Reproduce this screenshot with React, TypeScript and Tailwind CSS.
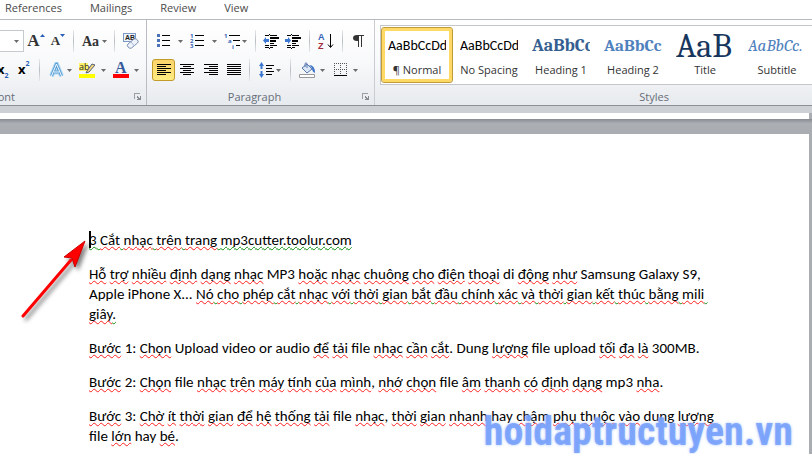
import type { ReactNode } from "react";
import clsx from "clsx";

const tabs = ["References", "Mailings", "Review", "View"];

const styles = [
  {
    name: "¶ Normal",
    sample: "AaBbCcDd",
    className: "font-['Carlito','Lato',sans-serif] text-[14px] text-black",
    selected: true,
  },
  {
    name: "No Spacing",
    sample: "AaBbCcDd",
    className: "font-['Carlito','Lato',sans-serif] text-[14px] text-black",
  },
  {
    name: "Heading 1",
    sample: "AaBbCc",
    className:
      "font-['Caladea','DejaVu_Serif_Condensed',serif] text-[18px] font-bold text-[#365f91]",
  },
  {
    name: "Heading 2",
    sample: "AaBbCc",
    className:
      "font-['Caladea','DejaVu_Serif_Condensed',serif] text-[17px] font-bold text-[#4f81bd]",
  },
  {
    name: "Title",
    sample: "AaB",
    className:
      "font-['Caladea','DejaVu_Serif_Condensed',serif] text-[34px] text-[#17365d]",
  },
  {
    name: "Subtitle",
    sample: "AaBbCc.",
    className:
      "font-['Caladea','DejaVu_Serif_Condensed',serif] text-[17px] italic text-[#4f81bd]",
  },
];

const paragraphs = [
  { grammar: [0], lines: ["3 Cắt nhạc trên trang mp3cutter.toolur.com"] },
  {
    grammar: [2, 3],
    lines: [
      "Hỗ trợ nhiều định dạng nhạc MP3 hoặc nhạc chuông cho điện thoại di động như Samsung Galaxy S9,",
      "Apple iPhone X... ",
      "Nó cho phép cắt nhạc với thời gian bắt đầu chính xác và thời gian kết thúc bằng mili ",
      "giây.",
    ],
  },
  {
    grammar: [],
    lines: [
      "Bước 1: Chọn Upload video or audio để tải file nhạc cần cắt. Dung lượng file upload tối đa là 300MB.",
    ],
  },
  {
    grammar: [],
    lines: [
      "Bước 2: Chọn file nhạc trên máy tính của mình, nhớ chọn file âm thanh có định dạng mp3 nha.",
    ],
  },
  {
    grammar: [],
    lines: [
      "Bước 3: Chờ ít thời gian để hệ thống tải file nhạc, thời gian nhanh hay chậm phụ thuộc vào dung lượng",
      "file lớn hay bé.",
    ],
  },
];

// Words the spell checker accepts
const dictionary = new Set(
  "MP3 di Samsung Galaxy S9 Apple iPhone X Upload video or audio file Dung upload 300MB mp3 hay dung mp3cutter.toolur.com 1 2 3".split(
    " ",
  ),
);

function CheckedText({ text, grammar }: { text: string; grammar: boolean }) {
  return text.split(/(\s+|[.,:]+(?=\s|$))/).map((part, i) => {
    const misspelled = /\p{L}/u.test(part) && !dictionary.has(part);
    if (!misspelled && !grammar) return part;
    return (
      <span
        key={i}
        className={clsx(
          "underline decoration-wavy decoration-1 underline-offset-1 [text-decoration-skip-ink:none]",
          misspelled ? "decoration-[#ff2020]" : "decoration-[#109010]",
        )}
      >
        {part}
      </span>
    );
  });
}

function Tool({
  label,
  className,
  children,
}: {
  label: string;
  className: string;
  children: ReactNode;
}) {
  return (
    <button
      type="button"
      aria-label={label}
      className={clsx("flex h-[22px] shrink-0 items-center", className)}
    >
      {children}
    </button>
  );
}

function Caret() {
  return (
    <svg width="5" height="3" className="shrink-0" fill="#6b6b6b">
      <path d="M0 0h5L2.5 3z" />
    </svg>
  );
}

function Separator() {
  return (
    <div className="mx-1 h-[22px] w-px shrink-0 bg-linear-to-b from-[#e6e8eb] via-[#b9bec5] to-[#e6e8eb]" />
  );
}

function Lines({ rows }: { rows: [number, number][] }) {
  return (
    <svg width="14" height="12" className="shrink-0" shapeRendering="crispEdges">
      {rows.map(([x, w], i) => (
        <rect key={i} x={x} y={i * 2} width={w} height="1" fill="#000" />
      ))}
    </svg>
  );
}

function IndentIcon({ increase }: { increase?: boolean }) {
  return (
    <svg width="16" height="15" shapeRendering="crispEdges">
      <path d="M2 1h4v1H2zM7 1h7v1H7zM2 11h4v1H2zM7 11h7v1H7zM2 13h4v1H2zM7 13h3v1H7zM7 3h9v2H7zM7 6h6v2H7zM7 9h4v1H7zM6 0h1v1H6zM6 14h1v1H6z" />
      <path
        d={increase ? "M6 6.500 3 3v2H0v3h3v2z" : "M0 6.500 3 3v2h3v3H3v2z"}
        fill="#3c78d2"
        shapeRendering="auto"
      />
    </svg>
  );
}

function Group({
  name,
  launcher,
  className,
  children,
}: {
  name: string;
  launcher?: boolean;
  className?: string;
  children: ReactNode;
}) {
  return (
    <section
      aria-label={name}
      className={clsx("flex shrink-0 flex-col justify-between", className)}
    >
      {children}
      <div className="flex h-4 items-center">
        <h2 className="flex-1 text-center leading-4 text-[#666e7a]">{name}</h2>
        {launcher && (
          <button type="button" aria-label={`${name} settings`} className="mr-1">
            <svg width="8" height="8" shapeRendering="crispEdges">
              <path d="M.5 6V.5H6" stroke="#9a9fa6" fill="none" />
              <path d="M3 3h1v1h1v1h1V3h1v4H3V6h1V5H3z" fill="#868b92" />
            </svg>
          </button>
        )}
      </div>
    </section>
  );
}

function FontGroup() {
  return (
    <Group
      name="Font"
      launcher
      className="w-[147px] border-r border-[#b9bdc3] [&_h2]:-ml-2 [&_h2]:text-left"
    >
      <div className="flex flex-col gap-[7px] pt-[10px] font-['Liberation_Serif',serif] font-bold text-[#333]">
        <div className="flex items-center">
          <Tool label="Font size" className="mr-px w-6 justify-end border border-l-0 border-[#c6c9ce] bg-white pr-1">
            <Caret />
          </Tool>
          <Tool label="Grow font" className="w-[22px] justify-center text-[17px]">
            A
            <svg width="5" height="14" fill="#2b5fb8"><path d="M0 3h5L2.500 0z" /></svg>
          </Tool>
          <Tool label="Shrink font" className="w-[22px] justify-center text-[13px]">
            A
            <svg width="5" height="14" fill="#2b5fb8"><path d="M0 0h5L2.500 3z" /></svg>
          </Tool>
          <Separator />
          <Tool label="Change case" className="w-8 gap-[3px] pl-1 text-[14px]">
            Aa
            <Caret />
          </Tool>
          <Separator />
          <Tool label="Clear formatting" className="w-6 justify-center">
            <svg width="16" height="16">
              <rect x=".5" y=".5" width="12" height="8" fill="#eef4fc" stroke="#7c98c4" />
              <text x="2" y="7" fontSize="7" fontFamily="Liberation Sans" fill="#222">AB</text>
              <path d="M5 11l6-5q2-1 3.500 1t0 3l-6 5q-2 1-3.500-1t0-3z" fill="#eef2fa" stroke="#7b8fb5" />
              <path d="M8 9l3.500 4" stroke="#a9b7d1" />
            </svg>
          </Tool>
        </div>
        <div className="flex items-center font-['Open_Sans',sans-serif]">
          <Tool label="Subscript" className="-ml-[3px] w-[17px] text-[13px] text-black">
            x<span className="self-end text-[7px] text-[#2b5fb8]">2</span>
          </Tool>
          <Tool label="Superscript" className="w-[21px] pl-1 text-[13px] text-black">
            x<span className="self-start text-[7px] text-[#2b5fb8]">2</span>
          </Tool>
          <Separator />
          <Tool label="Text effects" className="w-[34px] gap-[3px] pl-[5px]">
            <svg width="15" height="16" className="shrink-0" fill="none" strokeLinejoin="round">
              <path d="M2.500 14 7.500 2l5 12M5 10h5" stroke="#b9def5" strokeWidth="5" />
              <path d="M2.500 14 7.500 2l5 12M5 10h5" stroke="#5b9fd4" strokeWidth="3" />
              <path d="M2.500 14 7.500 2l5 12M5 10h5" stroke="#f2faff" strokeWidth="1" />
            </svg>
            <Caret />
          </Tool>
          <Tool label="Text highlight color" className="w-[34px] gap-[6px] pl-px">
            <svg width="16" height="16">
              <path d="M0 1h9v8H0z" fill="#fff36b" />
              <text x="0" y="8" fontSize="9" fontFamily="Open Sans" fontWeight="400" fill="#222">ab</text>
              <path d="M8 9l5-7 3 1-6 7-3 1z" fill="#f4d67a" stroke="#55617a" />
              <path d="M0 12h16v4H0z" fill="#ff0" />
            </svg>
            <Caret />
          </Tool>
          <Tool label="Font color" className="w-[30px] gap-[5px] pl-px">
            <svg width="16" height="16">
              <text x="2" y="11" fontSize="16" fontFamily="Liberation Serif" fontWeight="700" fill="#345a9c">A</text>
              <path d="M0 12h16v4H0z" fill="#f00" />
            </svg>
            <Caret />
          </Tool>
        </div>
      </div>
    </Group>
  );
}

function ParagraphGroup() {
  return (
    <Group name="Paragraph" launcher className="w-[228px] border-r border-[#c9ccd1]">
      <div className="flex flex-col gap-[7px] pt-[10px]">
        <div className="flex items-center pl-[7px]">
          <Tool label="Bullets" className="w-[34px] gap-[7px] pl-[3px]">
            <svg width="14" height="14">
              <path d="M0 0h3v3H0zM0 5h3v3H0zM0 10h3v3H0z" fill="#4a72b8" />
              <path d="M5 1.500h8M5 6.500h8M5 11.500h8" stroke="#000" />
            </svg>
            <Caret />
          </Tool>
          <Tool label="Numbering" className="w-[34px] gap-[7px] pl-[2px]">
            <svg width="15" height="16" fontSize="6" fontFamily="Open Sans" fontWeight="700" fill="#3563b5">
              <text y="5">1</text>
              <text y="10">2</text>
              <text y="15">3</text>
              <path d="M5 2.500h9M5 7.500h9M5 12.500h9" stroke="#000" />
            </svg>
            <Caret />
          </Tool>
          <Tool label="Multilevel list" className="w-[29px] gap-[2px] pl-[2px]">
            <svg width="16" height="16" fontSize="6" fontFamily="Open Sans" fontWeight="700" fill="#3563b5">
              <text y="5">1</text>
              <text x="4" y="10">a</text>
              <text x="8" y="16">i</text>
              <path d="M5 2.500h11M9 7.500h7M12 12.500h4" stroke="#000" />
            </svg>
            <Caret />
          </Tool>
          <Separator />
          <Tool label="Decrease indent" className="w-[22px] pl-[3px]">
            <IndentIcon />
          </Tool>
          <Tool label="Increase indent" className="w-[23px] pl-[3px]">
            <IndentIcon increase />
          </Tool>
          <Separator />
          <Tool label="Sort" className="w-6 pl-1">
            <svg width="16" height="16" fontSize="9" fontFamily="Liberation Sans" fontWeight="700">
              <text y="7" fill="#3563b5">A</text>
              <text y="16" fill="#a02c3c">Z</text>
              <path d="M12.500 1v13M10 11.500l2.500 3 2.500-3" stroke="#000" fill="none" />
            </svg>
          </Tool>
          <Separator />
          <Tool label="Show paragraph marks" className="w-6 justify-center text-black">
            <svg width="12" height="12">
              <path d="M5 0h6v1H5zM4 0q-4 0-4 3t4 3h2V0z" fill="#333" />
              <path d="M5.500 0v12M8.500 0v12" stroke="#333" />
            </svg>
          </Tool>
        </div>
        <div className="flex items-center pl-[5px]">
          <Tool label="Align left" className="w-[23px] justify-center rounded-[3px] border border-[#c29b29] bg-linear-to-b from-[#fbd36b] to-[#ffec80]">
            <Lines rows={[[0, 14], [0, 9], [0, 14], [0, 9], [0, 14], [0, 9]]} />
          </Tool>
          <Tool label="Center" className="w-6 justify-center">
            <Lines rows={[[0, 14], [3, 8], [0, 14], [3, 8], [0, 14], [3, 8]]} />
          </Tool>
          <Tool label="Align right" className="w-6 justify-center">
            <Lines rows={[[0, 14], [5, 9], [0, 14], [5, 9], [0, 14], [5, 9]]} />
          </Tool>
          <Tool label="Justify" className="w-[22px] justify-center">
            <Lines rows={[[0, 14], [0, 14], [0, 14], [0, 14], [0, 14], [0, 14]]} />
          </Tool>
          <Separator />
          <Tool label="Line spacing" className="w-8 gap-[2px] pl-[5px]">
            <svg width="15" height="16">
              <path d="M0 4l2.500-4L5 4H3.500v3h-2V4zM0 12l2.500 4L5 12H3.500V9h-2v3z" fill="#3c78d2" />
              <path d="M7 3.500h8M7 6.500h6M7 9.500h8M7 12.500h6" stroke="#000" />
            </svg>
            <Caret />
          </Tool>
          <Separator />
          <Tool label="Shading" className="w-[39px] gap-[4px] pl-1">
            <svg width="17" height="16">
              <path d="M3 6l5-4 5 5-5 4z" fill="#dbe7f7" stroke="#5b79ad" />
              <path d="M6 5V1.500Q7 0 8 1.500V6" stroke="#5b79ad" fill="none" />
              <path d="M10 3q6 0 6 8-3-1-3-5z" fill="#3e75c9" />
              <path d="M.5 12.500h15v3H.5z" fill="#fff" stroke="#999" />
            </svg>
            <Caret />
          </Tool>
          <Tool label="Borders" className="w-8 gap-[6px]">
            <svg width="13" height="14" shapeRendering="crispEdges">
              <path d="M0 .5h13M0 6.500h13M.5 0v12M6.500 0v12M12.500 0v12" stroke="#555" strokeDasharray="1 1" />
              <path d="M0 12h13v1H0z" />
            </svg>
            <Caret />
          </Tool>
        </div>
      </div>
    </Group>
  );
}

function StylesGroup() {
  return (
    <section aria-label="Styles" className="flex min-w-0 flex-1 flex-col justify-between overflow-hidden pl-[5px]">
      <div className="mt-[5px] flex h-[60px] border border-r-0 border-[#c3c7cc] bg-white">
        {styles.map(({ name, sample, className, selected }) => (
          <button
            key={name}
            type="button"
            className={clsx(
              "my-px flex w-[72px] shrink-0 flex-col items-center rounded-[3px] border px-[6px] pt-[5px]",
              selected
                ? "border-[#c29b3a] shadow-[inset_0_0_0_3px_#ffd966]"
                : "border-transparent",
            )}
          >
            <span className={clsx("flex h-[26px] w-[58px] items-end overflow-hidden whitespace-nowrap leading-[26px]", className)}>
              {sample}
            </span>
            <span className="whitespace-nowrap leading-[22px] text-[#333]">{name}</span>
          </button>
        ))}
      </div>
      <h2 className="h-4 pr-[143px] text-right leading-4 text-[#666e7a]">Styles</h2>
    </section>
  );
}

function Ribbon() {
  return (
    <header className="shrink-0 font-['Open_Sans',sans-serif] text-[11px]">
      <nav className="flex h-5 gap-7 border-b border-[#b6babf] bg-white pl-[5px] leading-4 text-[#4a4a4a]">
        {tabs.map((tab) => (
          <a key={tab} href={`#${tab.toLowerCase()}`}>
            {tab}
          </a>
        ))}
      </nav>
      <div className="flex h-[86px] border-b border-[#8b9097] bg-linear-to-b from-white via-[#f8f9fa] to-[#e7eaee]">
        <FontGroup />
        <ParagraphGroup />
        <StylesGroup />
      </div>
    </header>
  );
}

function Pointer() {
  return (
    <svg
      width="76"
      height="88"
      className="absolute top-[104px] left-[18px] drop-shadow-[3px_3px_2px_rgba(0,0,0,0.5)]"
    >
      <path d="M5 78 53 22" stroke="#f00" strokeWidth="3" strokeLinecap="round" />
      <path d="M67 3 46 19l8 1 3 9z" fill="#f00" stroke="#c00" strokeWidth="1" />
    </svg>
  );
}

export default function App() {
  return (
    <div className="flex h-screen flex-col overflow-hidden bg-[#a9adb2]">
      <Ribbon />
      <div className="h-[7px] shrink-0 bg-[#cdd1d6]" />
      <div className="mr-[3px] h-[6px] shrink-0 bg-white" />
      <div className="h-[15px] shrink-0 bg-linear-to-b from-[#888c92] via-[#abafb4] via-30% to-[#a9adb2]" />
      <main className="relative mr-[3px] flex-1 bg-white pt-24 pl-[89px]">
        <article className="flex flex-col gap-[14px] font-['Carlito','Lato',sans-serif] text-[15px] leading-5 whitespace-pre text-black">
          {paragraphs.map(({ lines, grammar }, p) => (
            <p key={p}>
              {lines.map((line, i) => (
                <span key={i}>
                  <CheckedText text={line} grammar={(grammar as number[]).includes(i)} />
                  {!line.startsWith("Apple") && i < lines.length - 1 && <br />}
                </span>
              ))}
            </p>
          ))}
        </article>
        <div className="absolute top-[97px] left-[89px] h-[17px] w-[2px] bg-black" />
        <Pointer />
        <p className="absolute right-4 bottom-0 font-['Roboto_Condensed','Roboto',sans-serif] text-[40px] leading-[44px] font-bold text-[#6f9bfa]/80 [text-shadow:0_0_3px_#a9c3ff]">
          hoidaptructuyen.vn
        </p>
      </main>
    </div>
  );
}
